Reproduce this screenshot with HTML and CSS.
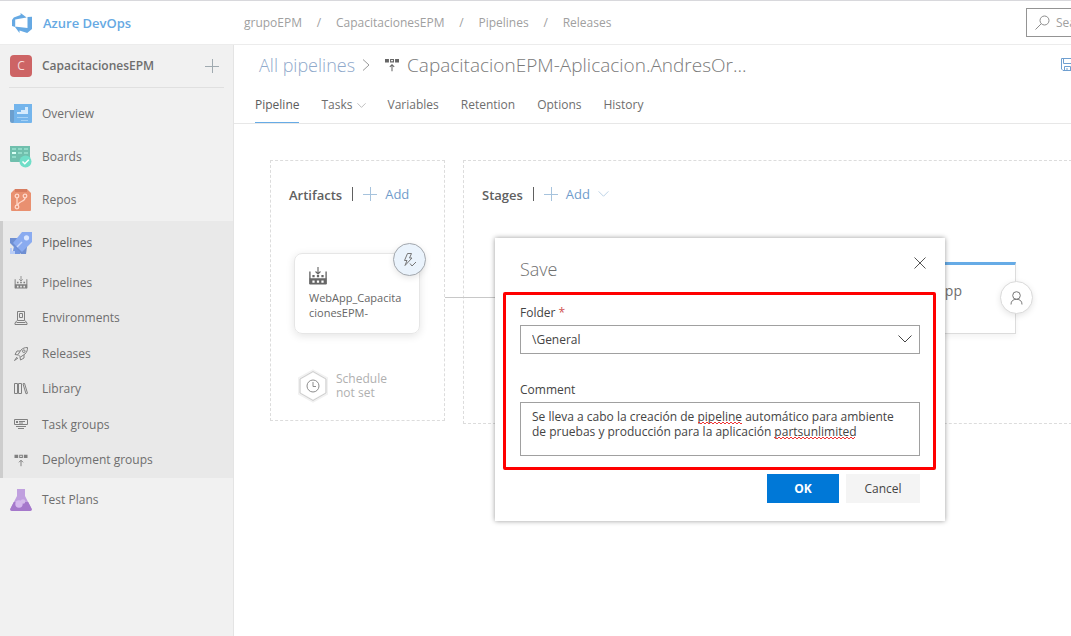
FILE: index.html
```html
<!DOCTYPE html>
<html lang="en">
<head>
<meta charset="utf-8">
<title>Azure DevOps - Releases</title>
<link rel="stylesheet" href="styles.css">
</head>
<body>
<svg class="defs" width="0" height="0" aria-hidden="true">
  <symbol id="i-build" viewBox="0 0 16 16"><path d="M.8 4v11M15.2 4v11" stroke="currentColor" stroke-width="1.2"/><path d="M8 0v6M5.8 4 8 6.2 10.2 4" fill="none" stroke="currentColor"/><path d="M3 7h2v2H3zM7 7h2v2H7zM11 7h2v2h-2zM.5 10h15v5.5H.5zM3 12v2h2v-2zM7 12v2h2v-2zM11 12v2h2v-2z" fill="currentColor" fill-rule="evenodd"/></symbol>
  <symbol id="i-group" viewBox="0 0 16 16"><path d="M0 1h4.500v4H0zM11.500 1H16v4h-4.500zM5.800 1h4.500v4H5.800zM7 2.200v1.600h2V2.200z" fill="currentColor" fill-rule="evenodd"/><path d="M8 15V8M5.500 10.200 8 7.700l2.500 2.500" fill="none" stroke="currentColor" stroke-width="1.200"/></symbol>
  <symbol id="i-plus" viewBox="0 0 14 14"><path d="M7.500 0v14M0 7.500h14" fill="none" stroke="currentColor"/></symbol>
  <symbol id="i-down" viewBox="0 0 14 8"><path d="m.5.5 6.500 6.500L13.500.5" fill="none" stroke="currentColor"/></symbol>
</svg>

<header class="topbar">
  <a class="brand" href="#">
    <svg width="20" height="20" viewBox="0 0 20 20" aria-hidden="true"><path fill="currentColor" d="M0 7 1.800 4.600 8.600 1.900V0l6 4.400L3.200 6.600v7.300L0 13zM20 3.800v12.300L15.200 20l-7.700-2.500V20l-4.900-6.400 12.900 1.500V4z"/></svg>
    <span>Azure DevOps</span>
  </a>
  <nav class="crumbs" aria-label="Breadcrumb">
    <a href="#">grupoEPM</a><span>/</span>
    <a href="#">CapacitacionesEPM</a><span>/</span>
    <a href="#">Pipelines</a><span>/</span>
    <a href="#">Releases</a>
  </nav>
  <label class="search">
    <svg width="15" height="15" viewBox="0 0 15 15" aria-hidden="true"><circle cx="9.500" cy="5.500" r="4.500" fill="none" stroke="currentColor"/><path d="M6.300 8.700.5 14.500" stroke="currentColor"/></svg>
    <input type="search" placeholder="Search" aria-label="Search">
  </label>
</header>

<div class="shell">
  <aside class="sidebar">
    <div class="project">
      <span class="avatar">C</span>
      <a href="#">CapacitacionesEPM</a>
      <button class="plain" type="button" aria-label="New"><svg width="14" height="14"><use href="#i-plus"/></svg></button>
    </div>
    <nav class="nav" aria-label="Project">
      <a class="item" href="#"><svg width="22" height="22" viewBox="0 0 22 22" aria-hidden="true"><path d="M0 7h6v13H2a2 2 0 0 1-2-2z" fill="#6c9fce"/><path d="M4 1h18v18a1 1 0 0 1-1 1H2c2 0 2-1 2-3z" fill="#74b5ec"/><path d="M7 11V9h4V7h4V4h3v7z" fill="#d5ebfd"/><path d="M7 14h11v1H7zM11 17h7v1h-7z" fill="#a5d1f5"/></svg>Overview</a>
      <a class="item" href="#"><svg width="22" height="22" viewBox="0 0 22 22" aria-hidden="true"><path d="M0 0h20v16H1a1 1 0 0 1-1-1z" fill="#70bfad"/><path d="M2 2h4v2H2zM8 2h4v2H8zM14 2h4v2h-4zM8 6h4v2H8zM14 6h4v2h-4zM2 10h4v2H2z" fill="#91dac8"/><path d="M2 6h4v2H2z" fill="#dafff5"/><circle cx="15.500" cy="15.500" r="6" fill="#70dec8"/><path d="m12.500 15.500 2.300 2.300 4-4" fill="none" stroke="#fff" stroke-width="1.500"/></svg>Boards</a>
      <a class="item" href="#"><svg width="22" height="22" viewBox="0 0 22 22" aria-hidden="true"><path d="M5 0h12l4 4v17a1 1 0 0 1-1 1H2a1 1 0 0 1-1-1V4z" fill="#e99070"/><path d="M5 0h12v3H5z" fill="#d77c60"/><g fill="none" stroke="#ffd8ca" stroke-width="1.300"><circle cx="7" cy="7" r="1.800"/><circle cx="15" cy="7" r="1.800"/><circle cx="7" cy="18" r="1.800"/><path d="M7 9v7M15 9c0 4-7 3-7 7"/></g></svg>Repos</a>
      <div class="group">
        <a class="item current" href="#"><svg width="22" height="22" viewBox="0 0 22 22" aria-hidden="true"><path d="M0 6h8l9 9-1 7h-5L0 11z" fill="#6f8fd2"/><path d="M12 0h10v10L12 20 3 11z" fill="#8aabf0"/><path d="m4 14 6 6v2H5l-2-3z" fill="#7396df"/><circle cx="16.500" cy="5.800" r="2.600" fill="#dbe7ff"/><path d="m12 10-5 5" stroke="#c8d8fb" stroke-width="1.500"/><path d="M0 16h2v3h3v3H0z" fill="#b9cdf7"/></svg>Pipelines</a>
        <div class="sub">
          <a class="item" href="#"><svg width="13" height="13"><use href="#i-build"/></svg>Pipelines</a>
          <a class="item" href="#"><svg width="13" height="14" viewBox="0 0 13 14" fill="none" stroke="currentColor" aria-hidden="true"><path d="M3 .5h7v9H3zM5 2.500h3v4H5zM2.500 9.500.5 12v1.500h12V12l-2-2.500M2 11.500h9"/></svg>Environments</a>
          <a class="item" href="#"><svg width="14" height="14" viewBox="0 0 14 14" fill="none" stroke="currentColor" aria-hidden="true"><path d="m4 7.500 3-4.500c2-2 4-2.500 6.500-2.500C13.500 3 13 5 11 7l-4.500 3zM6 4H3L1 7.500l3 .5M10 8v3l-3.500 2-.5-3M3 10 .5 13.500 4 11"/><circle cx="9.800" cy="4.200" r="1.300"/></svg>Releases</a>
          <a class="item" href="#"><svg width="14" height="12" viewBox="0 0 14 12" fill="none" stroke="currentColor" aria-hidden="true"><path d="M.5.500h3v10h-3zM4.500.500h3v10h-3zM9 .8l1.500-.5 3 10-1.500.5z"/></svg>Library</a>
          <a class="item" href="#"><svg width="14" height="11" viewBox="0 0 14 11" fill="none" stroke="currentColor" aria-hidden="true"><path d="M.5.5h13v5H.5zM2 7.500h10M4 9.500h6M5 2.500h6M5 4h4"/><path d="M2 2h2v2H2z" fill="currentColor" stroke="none"/></svg>Task groups</a>
          <a class="item" href="#"><svg width="13" height="13"><use href="#i-group"/></svg>Deployment groups</a>
        </div>
      </div>
      <a class="item" href="#"><svg width="22" height="22" viewBox="0 0 22 22" aria-hidden="true"><path d="M7 0h8v7l6.500 12.500c.8 1.500 0 2.500-1.500 2.500H2C.5 22-.300 21 .5 19.500L7 7z" fill="#c0a0df"/><path d="M3.800 13h14.400l3.300 6.500c.8 1.500 0 2.500-1.500 2.500H2C.5 22-.300 21 .5 19.500z" fill="#a578cb"/><circle cx="9" cy="15" r="3.700" fill="#d6b9ee"/><circle cx="13" cy="12.500" r="2.300" fill="#d4bbea"/></svg>Test Plans</a>
    </nav>
  </aside>

  <main class="main">
    <div class="titlebar">
      <a class="all" href="#">All pipelines</a>
      <svg class="sep" width="8" height="12" viewBox="0 0 8 12" aria-hidden="true"><path d="m1 .5 6 5.500-6 5.500" fill="none" stroke="currentColor"/></svg>
      <svg class="kind" width="14" height="14" aria-hidden="true"><use href="#i-group"/></svg>
      <h1>CapacitacionEPM-Aplicacion.AndresOr...</h1>
      <button class="plain save" type="button" aria-label="Save pipeline"><svg width="13" height="13" viewBox="0 0 13 13" fill="none" stroke="currentColor" aria-hidden="true"><path d="M.5.5h12v12H2l-1.500-1.500zM2.500.5v5h8v-5M3.500 12.500v-4h6v4M6 10v2.500"/></svg></button>
    </div>
    <nav class="tabs" aria-label="Pipeline sections">
      <a class="on" href="#">Pipeline</a>
      <a href="#">Tasks<svg width="9" height="5"><use href="#i-down"/></svg></a>
      <a href="#">Variables</a>
      <a href="#">Retention</a>
      <a href="#">Options</a>
      <a href="#">History</a>
    </nav>

    <div class="canvas">
      <section class="lane artifacts">
        <div class="lane-head">
          <h2>Artifacts</h2>
          <button class="plain add" type="button"><svg width="14" height="14"><use href="#i-plus"/></svg>Add</button>
        </div>
        <div class="artifact">
          <svg width="18" height="18" aria-hidden="true"><use href="#i-build"/></svg>
          <span>WebApp_Capacita<br>cionesEPM-</span>
          <button class="badge trigger" type="button" aria-label="Continuous deployment trigger"><svg width="14" height="14" viewBox="0 0 14 14" fill="none" stroke="currentColor" aria-hidden="true"><path d="M4.500.5h4L6.500 5H9L2 12.500 4 7.500H1.500zM7 10.500l2 2.500 4-4"/></svg></button>
        </div>
        <div class="schedule">
          <svg width="32" height="34" viewBox="0 0 32 34" fill="none" aria-hidden="true"><path d="M16 2 29.500 9.500v15L16 32 2.500 24.500v-15z" fill="#fff" stroke="#f1f1f1" stroke-width="3"/><path d="M16 2.500 29 10v14L16 31.500 3 24V10z" stroke="#cfcfcf"/><circle cx="16" cy="17" r="6" stroke="#8c8c8c"/><path d="M16 13v4.500h3" stroke="#8c8c8c"/></svg>
          <span>Schedule<br>not set</span>
        </div>
      </section>
      <section class="lane stages">
        <div class="lane-head">
          <h2>Stages</h2>
          <button class="plain add" type="button"><svg width="14" height="14"><use href="#i-plus"/></svg>Add<svg class="caret" width="11" height="6"><use href="#i-down"/></svg></button>
        </div>
      </section>
      <div class="link"></div>
      <div class="stage">
        <span>App</span>
        <button class="badge" type="button" aria-label="Approvals"><svg width="13" height="14" viewBox="0 0 13 14" fill="none" stroke="currentColor" aria-hidden="true"><circle cx="6.500" cy="4.500" r="3.800"/><path d="M1 13.500c0-3.500 2-5.200 5.500-5.200s5.500 1.700 5.500 5.200"/></svg></button>
      </div>
    </div>

    <form class="dialog" role="dialog" aria-labelledby="dlg-title">
      <div class="dialog-head">
        <h2 id="dlg-title">Save</h2>
        <button class="plain" type="button" aria-label="Close"><svg width="12" height="12" viewBox="0 0 12 12" aria-hidden="true"><path d="m.5.5 11 11m0-11-11 11" stroke="currentColor"/></svg></button>
      </div>
      <label for="folder">Folder <em>*</em></label>
      <div class="select">
        <select id="folder"><option>\General</option></select>
        <svg width="14" height="8" aria-hidden="true"><use href="#i-down"/></svg>
      </div>
      <label for="comment">Comment</label>
      <div class="comment">
        <textarea id="comment" spellcheck="false">Se lleva a cabo la creación de pipeline automático para ambiente de pruebas y producción para la aplicación partsunlimited</textarea>
        <i class="squiggle first"></i>
        <i class="squiggle second"></i>
      </div>
      <div class="actions">
        <button class="ok" type="submit">OK</button>
        <button class="cancel" type="button">Cancel</button>
      </div>
      <div class="highlight"></div>
    </form>
  </main>
</div>
</body>
</html>
```
FILE: styles.css
```css
* { box-sizing: border-box; }
body {
  margin: 0;
  min-height: 100vh;
  display: flex;
  flex-direction: column;
  overflow: hidden;
  background: #fff;
  color: #6e6e6e;
  font: 12px/20px "Open Sans", "Noto Sans", sans-serif;
}
a { color: inherit; text-decoration: none; }
h1, h2 { margin: 0; font-weight: 400; }
svg { flex: none; display: block; }
button, input, select, textarea { font: inherit; color: inherit; }
.defs { position: absolute; }
.plain { display: flex; align-items: center; padding: 0; border: 0; background: none; }

.topbar {
  display: flex;
  align-items: center;
  height: 45px;
  border-top: 1px solid #d8d8dc;
  border-bottom: 1px solid #ececec;
  overflow: hidden;
}
.brand {
  display: flex;
  align-items: center;
  gap: 11px;
  width: 244px;
  padding-left: 12px;
  color: #66a9e3;
  font-size: 13px;
  font-weight: 600;
}
.crumbs { display: flex; color: #a0a0a0; }
.crumbs span { width: 34px; text-align: center; }
.search {
  display: flex;
  align-items: center;
  flex: none;
  gap: 6px;
  width: 240px;
  height: 29px;
  margin: 0 -195px 0 auto;
  padding-left: 8px;
  border: 1px solid #949494;
  color: #8c8c8c;
}
.search input { width: 200px; padding: 0; border: 0; outline: 0; background: none; }
.search input::placeholder { color: #a0a0a0; }

.shell { flex: 1; display: flex; }
.sidebar { flex: none; width: 234px; background: #f1f1f1; border-right: 1px solid #e4e4e4; }
.project {
  display: flex;
  align-items: center;
  height: 43px;
  margin: 0 9px;
  border-bottom: 1px solid #e0e0e0;
  font-weight: 600;
}
.project a { margin: 0 auto 0 10px; }
.project .plain { margin-right: 5px; color: #a0aab0; }
.avatar {
  width: 22px;
  height: 22px;
  margin-left: 1px;
  border-radius: 4px;
  background: #cd6465;
  color: #f5dada;
  font-weight: 400;
  line-height: 22px;
  text-align: center;
}
.nav { padding-top: 4px; }
.item { display: flex; align-items: center; gap: 10px; height: 43px; padding-left: 10px; }
.group { background: #e9e9e9; box-shadow: inset 3px 0 #cdcdcd; }
.group > .item { height: 44px; }
.current { font-weight: 500; color: #5c5c5c; }
.sub { display: grid; grid-auto-rows: 1fr; height: 213px; }
.sub .item { height: auto; gap: 14px; padding-left: 14px; }
.sub .item svg { width: 14px; color: #808080; }

.main { position: relative; flex: 1; min-width: 0; display: flex; flex-direction: column; }
.titlebar { display: flex; align-items: center; height: 43px; padding: 0 0 4px 25px; overflow: hidden; }
.titlebar h1 { margin-left: 8px; color: #7a7a7a; font-size: 19px; font-weight: 300; line-height: 28px; white-space: nowrap; }
.all { color: #8fa9cb; font-size: 18px; font-weight: 300; line-height: 28px; }
.sep { margin: 0 15px 0 7px; color: #999; }
.kind { color: #666; }
.save { margin: 0 -3px 0 auto; color: #6f9fd0; }
.tabs { display: flex; gap: 22px; height: 36px; padding-left: 21px; border-bottom: 1px solid #e7e7e7; }
.tabs a { display: flex; align-items: center; gap: 4px; height: 35px; border-bottom: 1px solid transparent; }
.tabs svg { color: #999; }
.tabs .on { border-color: #66abe6; color: #5c5c5c; font-weight: 500; }

.canvas {
  position: relative;
  flex: 1;
  display: grid;
  grid-template-columns: 175px 1fr;
  gap: 18px;
  align-items: start;
  padding: 36px 0 0 36px;
  overflow: hidden;
}
.lane { border: 1px dashed #dcdcdc; padding: 21px 18px; }
.artifacts { height: 261px; }
.stages { height: 264px; margin-right: -1px; }
.lane-head { display: flex; align-items: center; height: 24px; }
.lane-head h2 { padding-top: 2px; color: #606060; font-size: 13px; font-weight: 600; line-height: 20px; }
.add { margin-left: 10px; padding-left: 10px; color: #6f9ccb; gap: 8px; font-size: 13px; line-height: 14px; border-left: 1px solid #606060; }
.add svg { color: #a6c3dd; }
.artifact {
  position: relative;
  width: 126px;
  height: 81px;
  margin: 47px 0 0 5px;
  padding: 13px 14px;
  border: 1px solid #e6e6e6;
  border-radius: 8px;
  box-shadow: 0 2px 8px #0000001c;
  font-size: 11px;
  line-height: 15px;
  color: #666;
}
.artifact > span { display: block; margin-top: 5px; }
.badge {
  position: absolute;
  display: flex;
  align-items: center;
  justify-content: center;
  width: 33px;
  height: 33px;
  padding: 0;
  border: 1px solid #dadada;
  border-radius: 50%;
  background: #fff;
  color: #777;
  box-shadow: 0 2px 6px #0000001a;
}
.trigger { top: -11px; right: -7px; border-color: #a2a7ad; background: #eaf3fc; }
.schedule { display: flex; align-items: center; gap: 7px; margin: 35px 0 0 8px; color: #b0b0b0; line-height: 14px; }
.link { position: absolute; left: 211px; right: 126px; top: 173px; border-top: 1px solid #c8c8c8; }
.stage {
  position: absolute;
  top: 138px;
  left: 600px;
  width: 182px;
  height: 72px;
  padding: 16px 53px;
  border: 1px solid #dcdcdc;
  border-top: 3px solid #66abe6;
  background: #fff;
  box-shadow: 0 3px 6px #0000000d;
  font-size: 14px;
  text-align: right;
}
.stage .badge { top: 16px; right: -18px; }

.dialog {
  position: absolute;
  left: 261px;
  top: 193px;
  width: 450px;
  padding: 17px 25px 18px;
  background: #fff;
  box-shadow: 0 0 5px #00000066;
  color: #444;
}
.dialog-head { display: flex; align-items: flex-start; justify-content: space-between; height: 48px; }
.dialog-head h2 { color: #707070; font-size: 18px; font-weight: 300; line-height: 28px; }
.dialog-head .plain { margin: 2px -6px 0 0; color: #555; }
.dialog > label { display: block; line-height: 20px; }
.dialog em { color: #d05050; font-style: normal; }
.select { position: relative; margin: 2px 0 26px; }
.select select {
  appearance: none;
  display: block;
  width: 100%;
  height: 29px;
  padding: 1px 11px 0;
  border: 1px solid #a0a0a0;
  border-radius: 0;
  background: #fff;
}
.select svg { position: absolute; right: 8px; top: 10px; pointer-events: none; }
.comment { position: relative; margin: 2px 0 18px; }
.comment textarea {
  display: block;
  width: 100%;
  height: 54px;
  padding: 6px 11px;
  border: 1px solid #a0a0a0;
  resize: none;
  overflow: hidden;
  line-height: 15px;
}
.squiggle {
  position: absolute;
  height: 2px;
  background: repeating-linear-gradient(90deg, #e33 0 2px, transparent 2px 4px) 0 0 / 100% 1px no-repeat,
    repeating-linear-gradient(90deg, transparent 0 2px, #e33 2px 4px) 0 1px / 100% 1px no-repeat;
}
.first { left: 178px; top: 20px; width: 44px; }
.second { left: 254px; top: 35px; width: 81px; }
.actions { display: flex; justify-content: flex-end; gap: 7px; }
.actions button { height: 29px; padding: 0; border: 0; }
.ok { width: 72px; background: #0078d7; color: #fff; font-weight: 700; }
.cancel { width: 74px; background: #f4f4f4; }
.highlight { position: absolute; inset: 54px 9px 51px 8px; border: 3px solid #f00; border-radius: 2px; pointer-events: none; }
```
